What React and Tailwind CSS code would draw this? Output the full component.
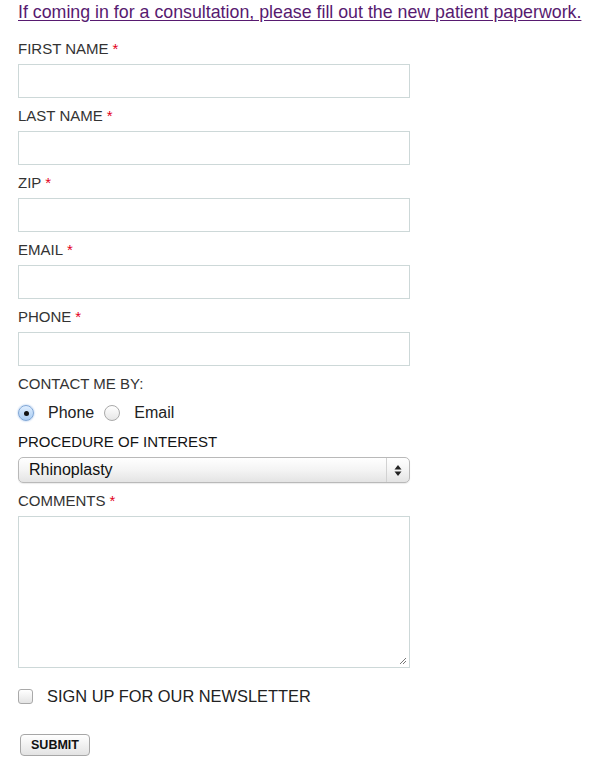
import { useState } from 'react'

const FONT = { fontFamily: '"Liberation Sans", Arial, Helvetica, sans-serif' }

function Label({ children, required, dark }) {
  return (
    <div className={`h-[18px] text-[15px] leading-[18px] ${dark ? 'text-[#141414]' : 'text-[#333]'}`}>
      {children}
      {required && <span className="ml-1 text-[#e3001b]">*</span>}
    </div>
  )
}

function TextField({ label }) {
  return (
    <div className="flex flex-col">
      <Label required>{label}</Label>
      <input
        type="text"
        className="mt-[6px] h-[34px] w-[392px] border border-[#cdd8d8] bg-white px-2 text-[15px] outline-none"
      />
    </div>
  )
}

function Radio({ checked, onClick, label }) {
  return (
    <button type="button" onClick={onClick} className="flex items-center gap-[14px]">
      <span
        className={`flex h-[16px] w-[16px] items-center justify-center rounded-full border ${
          checked
            ? 'border-[#7fa6d6] bg-gradient-to-b from-[#dfeeff] to-[#a9ccf2] shadow-[0_0_2px_#8bb3e6]'
            : 'border-[#a9a9a9] bg-gradient-to-b from-[#ffffff] to-[#e6e6e6]'
        }`}
      >
        {checked && <span className="h-[5px] w-[5px] rounded-full bg-[#111]" />}
      </span>
      <span className="text-[16px] leading-[20px] text-[#222]">{label}</span>
    </button>
  )
}

export default function App() {
  const [contact, setContact] = useState('phone')
  const [news, setNews] = useState(false)

  return (
    <div className="min-h-[760px] w-[600px] bg-white pl-[18px]" style={FONT}>
      <a
        href="#"
        className="block h-[22px] pt-[1px] text-[17.8px] leading-[22px] text-[#571a70] underline underline-offset-2"
      >
        If coming in for a consultation, please fill out the new patient paperwork.
      </a>

      <div className="mt-[18px] flex flex-col gap-[9px]">
        <TextField label="FIRST NAME" />
        <TextField label="LAST NAME" />
        <TextField label="ZIP" />
        <TextField label="EMAIL" />
        <TextField label="PHONE" />
      </div>

      <div className="mt-[9px]">
        <Label>CONTACT ME BY:</Label>
      </div>
      <div className="mt-[9px] flex h-[22px] items-center gap-[10px]">
        <Radio checked={contact === 'phone'} onClick={() => setContact('phone')} label="Phone" />
        <Radio checked={contact === 'email'} onClick={() => setContact('email')} label="Email" />
      </div>

      <div className="mt-[9px]">
        <Label dark>PROCEDURE OF INTEREST</Label>
      </div>
      <div className="relative mt-[6px] flex h-[26px] w-[392px] items-center rounded-[5px] border border-[#b9b9b9] bg-gradient-to-b from-[#ffffff] via-[#f4f4f4] to-[#e4e4e4] shadow-[0_1px_1px_rgba(0,0,0,0.08)]">
        <span className="flex-1 pl-[10px] text-[16px] leading-[20px] text-[#111]">Rhinoplasty</span>
        <span className="flex h-full w-[23px] items-center justify-center border-l border-[#d2d2d2]">
          <svg width="8" height="13" viewBox="0 0 8 13">
            <path d="M4 1 L7.5 5.5 L0.5 5.5 Z" fill="#222" />
            <path d="M4 12 L7.5 7.5 L0.5 7.5 Z" fill="#222" />
          </svg>
        </span>
      </div>

      <div className="mt-[9px]">
        <Label required>COMMENTS</Label>
      </div>
      <div className="relative mt-[6px] h-[152px] w-[392px] border border-[#cdd8d8] bg-white">
        <svg className="absolute bottom-[2px] right-[2px]" width="9" height="9" viewBox="0 0 9 9">
          <path d="M8 2 L2 8 M8 5 L5 8" stroke="#777" strokeWidth="1" />
        </svg>
      </div>

      <button type="button" onClick={() => setNews(!news)} className="mt-[18px] flex items-center gap-[14px]">
        <span className="flex h-[15px] w-[15px] items-center justify-center rounded-[3px] border border-[#a9a9a9] bg-gradient-to-b from-[#ffffff] to-[#e4e4e4]">
          {news && <span className="text-[11px] leading-none text-[#111]">✓</span>}
        </span>
        <span className="text-[16.4px] leading-[20px] text-[#222]">SIGN UP FOR OUR NEWSLETTER</span>
      </button>

      <button
        type="button"
        className="ml-[2px] mt-[28px] flex h-[22px] w-[70px] items-center justify-center rounded-[4px] border border-[#a7a7a7] bg-gradient-to-b from-[#ffffff] to-[#e3e3e3] text-[12.5px] font-bold text-[#111]"
      >
        SUBMIT
      </button>
    </div>
  )
}
